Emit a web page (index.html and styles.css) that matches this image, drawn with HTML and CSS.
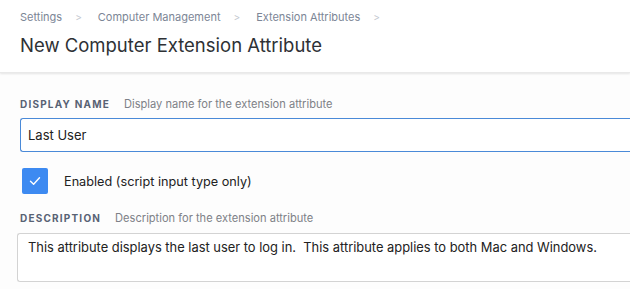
FILE: index.html
```html
<!DOCTYPE html>
<html lang="en">
<head>
<meta charset="utf-8">
<title>New Computer Extension Attribute</title>
<link rel="stylesheet" href="styles.css">
</head>
<body>
<header class="page-header">
  <nav class="crumbs">
    <span class="crumb">Settings</span><span class="sep">&gt;</span>
    <span class="crumb">Computer Management</span><span class="sep">&gt;</span>
    <span class="crumb">Extension Attributes</span><span class="sep">&gt;</span>
  </nav>
  <h1 class="title">New Computer Extension Attribute</h1>
</header>
<main class="form">
  <div class="field">
    <div class="label-row"><span class="label">Display Name</span><span class="hint">Display name for the extension attribute</span></div>
    <div class="input focused">Last User</div>
  </div>
  <div class="check-row">
    <span class="checkbox"><svg width="12" height="10" viewBox="0 0 12 10"><path d="M1.5 5.2 L4.6 8.2 L10.5 1.8" fill="none" stroke="#fff" stroke-width="1.4" stroke-linecap="round" stroke-linejoin="round"/></svg></span>
    <span class="check-label">Enabled (script input type only)</span>
  </div>
  <div class="field">
    <div class="label-row"><span class="label">Description</span><span class="hint">Description for the extension attribute</span></div>
    <div class="textarea">This attribute displays the last user to log in.&nbsp; This attribute applies to both Mac and Windows.</div>
  </div>
</main>
</body>
</html>
```
FILE: styles.css
```css
* { box-sizing: border-box; }
html, body { margin: 0; padding: 0; }
body {
  width: 630px;
  height: 289px;
  overflow: hidden;
  background: #fdfdfd;
  font-family: Inter, Lato, sans-serif;
  color: #2f3338;
}
.page-header {
  background: #fff;
  padding: 9px 20px 0;
  height: 73px;
  box-shadow: 0 1px 2px rgba(0,0,0,0.10);
  border-bottom: 1px solid #e9e9e9;
}
.crumbs {
  display: flex;
  align-items: center;
  font-size: 11px;
  line-height: 16px;
  color: #7c8696;
}
.sep {
  color: #c4c8cf;
  font-size: 10px;
  margin: 0 16px 0 13px;
}
.title {
  margin: 8px 0 0;
  font-weight: 400;
  font-size: 18.5px;
  line-height: 24px;
  color: #2e3135;
}
.form {
  padding: 24px 0 0 20px;
}
.label-row {
  display: flex;
  align-items: baseline;
  height: 16px;
}
.label {
  font-size: 10px;
  font-weight: 700;
  letter-spacing: 1.2px;
  text-transform: uppercase;
  color: #586274;
  margin-right: 14px;
}
.hint {
  font-size: 11.1px;
  color: #7d8187;
}
.input {
  margin-top: 5px;
  height: 34px;
  border: 1px solid #4a8ad8;
  border-right: none;
  border-radius: 3px 0 0 3px;
  padding: 0 7px;
  font-size: 13px;
  line-height: 32px;
  color: #222;
  background: #fff;
}
.check-row {
  display: flex;
  align-items: center;
  margin: 16px 0 0 2px;
  height: 26px;
}
.checkbox {
  width: 26px;
  height: 26px;
  background: #3d8af1;
  border-radius: 2px;
  display: flex;
  align-items: center;
  justify-content: center;
}
.check-label {
  margin-left: 16px;
  font-size: 12.7px;
  color: #222;
}
.check-row + .field { margin-top: 17px; }
.textarea {
  margin: 6px 0 0 -3px;
  height: 49px;
  border: 1px solid #d3d3d3;
  border-right: none;
  border-radius: 3px 0 0 3px;
  padding: 5px 10px;
  font-size: 12.9px;
  line-height: 18px;
  color: #222;
  background: #fff;
}
```
